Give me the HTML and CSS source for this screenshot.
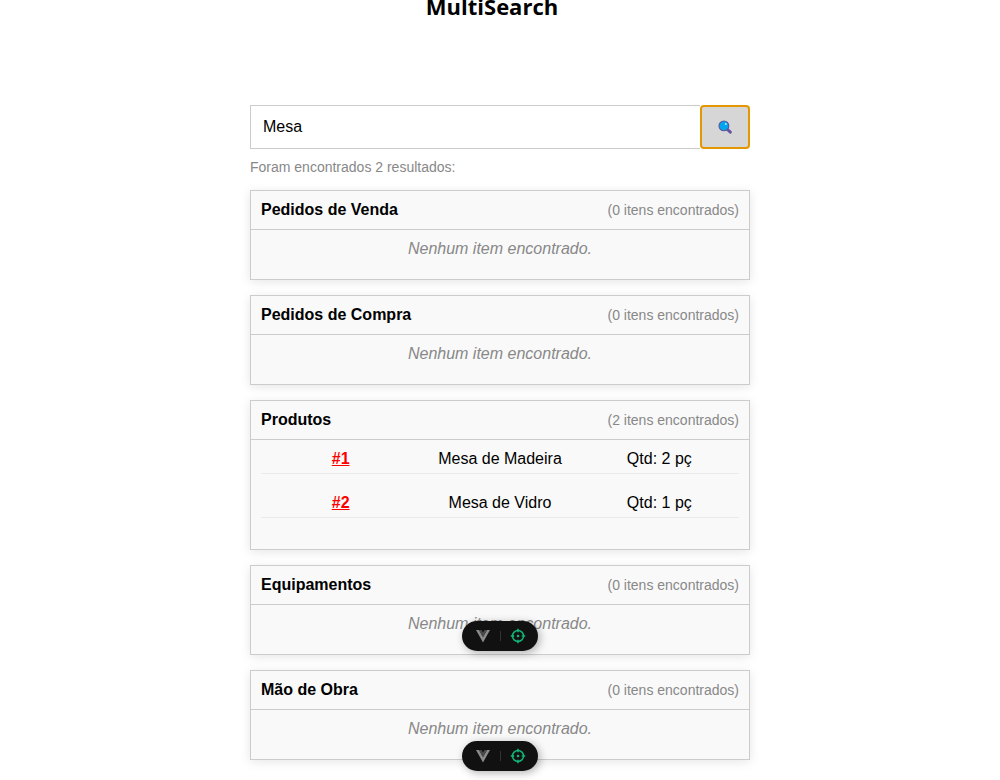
FILE: index.html
```html
<!DOCTYPE html>
<html lang="pt-BR">
<head>
<meta charset="utf-8">
<meta name="viewport" content="width=device-width, initial-scale=1">
<title>MultiSearch</title>
<link rel="stylesheet" href="styles.css">
</head>
<body>
<svg class="symbols" aria-hidden="true">
  <symbol id="vue" viewBox="0 0 14 13">
    <path d="M0 0h3l4 7 4-7h3L7 12.500z" fill="#8a8a8a"/>
    <path d="M3 0h2.500L7 2.500 8.500 0H11L7 7z" fill="#4a4a4a"/>
  </symbol>
  <symbol id="target" viewBox="0 0 16 16">
    <circle cx="8" cy="8" r="5.500" fill="none" stroke="#12b576" stroke-width="1.500"/>
    <circle cx="8" cy="8" r="1.300" fill="#12b576"/>
    <path d="M8 .8v3.400M8 11.800v3.400M.8 8h3.400M11.800 8h3.400" stroke="#12b576" stroke-width="1.500" fill="none"/>
  </symbol>
</svg>
<main class="page">
  <h1 class="title">MultiSearch</h1>
  <form class="search" role="search">
    <input class="search-input" type="text" value="Mesa" aria-label="Pesquisar">
    <button class="search-button" type="button" aria-label="Buscar">
      <svg class="search-icon" viewBox="0 0 14 14" aria-hidden="true">
        <path d="M9 9l3.300 3.100" stroke="#65549c" stroke-width="3" stroke-linecap="round"/>
        <circle cx="5.900" cy="5.900" r="4.900" fill="#00a4ef" stroke="#5b5599" stroke-width="1.100"/>
        <circle cx="7.800" cy="4" r=".9" fill="#c5efff"/>
      </svg>
    </button>
  </form>
  <p class="summary">Foram encontrados 2 resultados:</p>
  <div class="results">
    <section class="card">
      <header class="card-header"><h2 class="card-title">Pedidos de Venda</h2><span class="count">(0 itens encontrados)</span></header>
      <p class="empty">Nenhum item encontrado.</p>
    </section>
    <section class="card">
      <header class="card-header"><h2 class="card-title">Pedidos de Compra</h2><span class="count">(0 itens encontrados)</span></header>
      <p class="empty">Nenhum item encontrado.</p>
    </section>
    <section class="card">
      <header class="card-header"><h2 class="card-title">Produtos</h2><span class="count">(2 itens encontrados)</span></header>
      <ul class="items">
        <li class="item"><a class="item-link" href="#1">#1</a><span>Mesa de Madeira</span><span>Qtd: 2 pç</span></li>
        <li class="item"><a class="item-link" href="#2">#2</a><span>Mesa de Vidro</span><span>Qtd: 1 pç</span></li>
      </ul>
    </section>
    <section class="card">
      <header class="card-header"><h2 class="card-title">Equipamentos</h2><span class="count">(0 itens encontrados)</span></header>
      <p class="empty">Nenhum item encontrado.</p>
    </section>
    <section class="card">
      <header class="card-header"><h2 class="card-title">Mão de Obra</h2><span class="count">(0 itens encontrados)</span></header>
      <p class="empty">Nenhum item encontrado.</p>
    </section>
  </div>
</main>
<div class="devtools devtools-upper">
  <button class="tool" type="button" aria-label="Vue DevTools"><svg class="vue-icon"><use href="#vue"/></svg></button>
  <span class="divider"></span>
  <button class="tool" type="button" aria-label="Inspecionar componente"><svg class="target-icon"><use href="#target"/></svg></button>
</div>
<div class="devtools">
  <button class="tool" type="button" aria-label="Vue DevTools"><svg class="vue-icon"><use href="#vue"/></svg></button>
  <span class="divider"></span>
  <button class="tool" type="button" aria-label="Inspecionar componente"><svg class="target-icon"><use href="#target"/></svg></button>
</div>
</body>
</html>
```
FILE: styles.css
```css
* {
  box-sizing: border-box;
}

body {
  margin: 0;
  background: #fff;
  color: #000;
  font: 16px/18px "Liberation Sans", Arial, sans-serif;
}

.symbols {
  display: none;
}

.page {
  max-width: 500px;
  margin: 0 auto;
  padding-bottom: 20px;
}

.title {
  margin: 0 0 93px;
  padding-right: 16px;
  font: bold 22px/12px "Open Sans", sans-serif;
  text-align: center;
}

.search {
  display: flex;
  height: 44px;
}

.search-input {
  flex: 1;
  min-width: 0;
  padding: 0 12px;
  border: 1px solid #ccc;
  border-right: 0;
  background: #fff;
  color: #000;
  font: inherit;
  outline: none;
}

.search-button {
  display: flex;
  align-items: center;
  justify-content: center;
  width: 50px;
  padding: 0;
  border: 2px solid #e59700;
  border-radius: 4px;
  background: #d6d6d6;
}

.search-icon {
  width: 14px;
  height: 14px;
}

.summary {
  margin: 9px 0 14px;
  color: #888;
  font-size: 14px;
}

.results {
  display: flex;
  flex-direction: column;
  gap: 15px;
}

.card {
  border: 1px solid #ccc;
  background: #f9f9f9;
  box-shadow: 0 2px 10px rgba(0, 0, 0, 0.1);
}

.card-header {
  display: flex;
  align-items: center;
  justify-content: space-between;
  padding: 10px;
  border-bottom: 1px solid #ccc;
}

.card-title {
  margin: 0;
  font-size: 16px;
}

.count {
  color: #888;
  font-size: 14px;
}

.empty {
  margin: 0;
  padding: 10px 10px 21px;
  color: #888;
  font-style: italic;
  text-align: center;
}

.items {
  display: flex;
  flex-direction: column;
  gap: 20px;
  margin: 0;
  padding: 10px 10px 31px;
  list-style: none;
}

.item {
  display: grid;
  grid-template-columns: repeat(3, 1fr);
  padding-bottom: 5px;
  border-bottom: 1px solid #eaeaea;
  text-align: center;
}

.item-link {
  color: #f00;
  font-weight: bold;
}

.devtools {
  position: fixed;
  bottom: 9px;
  left: 50%;
  display: flex;
  align-items: center;
  justify-content: space-between;
  width: 76px;
  height: 30px;
  padding: 0 10px 0 11px;
  border-radius: 15px;
  background: #111;
  box-shadow: 2px 2px 8px rgba(0, 0, 0, 0.3);
  transform: translateX(-50%);
}

.devtools-upper {
  bottom: 129px;
}

.tool {
  display: flex;
  align-items: center;
  justify-content: center;
  width: 20px;
  height: 20px;
  padding: 0;
  border: 0;
  background: none;
}

.divider {
  width: 1px;
  height: 10px;
  background: #333;
}

.vue-icon {
  width: 14px;
  height: 13px;
}

.target-icon {
  width: 16px;
  height: 16px;
}
```
